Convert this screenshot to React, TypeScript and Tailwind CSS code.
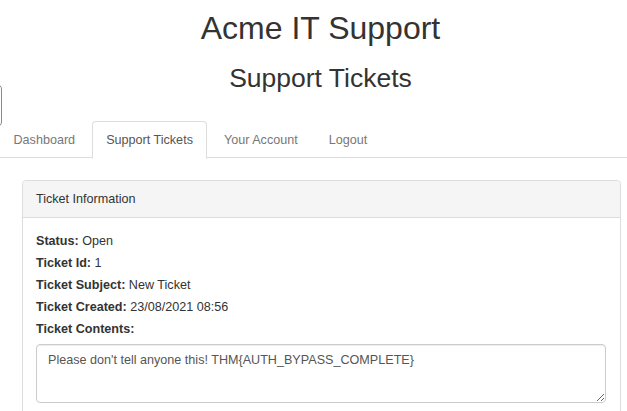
import React from "react";

export default function App() {
  const tabs = ["Dashboard", "Support Tickets", "Your Account", "Logout"];
  return (
    <div
      className="relative w-[627px] h-[411px] overflow-hidden bg-white text-[#333] text-[12.6px]"
      style={{ fontFamily: '"Liberation Sans", Arial, sans-serif' }}
    >
      <div className="absolute left-[-12px] top-[84px] w-[14px] h-[43px] border-[1.5px] border-[#8a8a8a] rounded-[5px]" />
      <div className="flex flex-col items-center pl-[14px]">
        <h1 className="mt-[11px] text-[32px] leading-[35px] text-[#333]">Acme IT Support</h1>
        <h2 className="mt-[18px] text-[26.5px] leading-[29px] text-[#333]">Support Tickets</h2>
      </div>
      <ul className="mt-[28px] -ml-px flex border-b border-[#ddd] h-[37px]">
        {tabs.map((t) => {
          const active = t === "Support Tickets";
          return (
            <li key={t} className="mr-[2px] -mb-px">
              <span
                className={
                  active
                    ? "block px-[13.5px] py-[9px] leading-[18px] border border-[#ddd] border-b-transparent rounded-t-[4px] bg-white text-[#555]"
                    : "block px-[13.5px] py-[9px] leading-[18px] border border-transparent text-[#777]"
                }
              >
                {t}
              </span>
            </li>
          );
        })}
      </ul>
      <div className="ml-[22px] mt-[22px] w-[599px] border border-[#ddd] rounded-[4px]">
        <div className="h-[37px] pt-px px-[13px] flex items-center bg-[#f5f5f5] border-b border-[#ddd] rounded-t-[4px]">
          Ticket Information
        </div>
        <div className="px-[13px] pt-[12px] pb-[13px]">
          <div className="leading-[22px]"><b>Status:</b> Open</div>
          <div className="leading-[22px]"><b>Ticket Id:</b> 1</div>
          <div className="leading-[22px]"><b>Ticket Subject:</b> New Ticket</div>
          <div className="leading-[22px]"><b>Ticket Created:</b> 23/08/2021 08:56</div>
          <div className="leading-[22px]"><b>Ticket Contents:</b></div>
          <textarea
            readOnly
            className="mt-[4px] block w-[570px] h-[59px] px-[11px] py-[6px] leading-[18px] text-[#555] border border-[#ccc] rounded-[4px] shadow-[inset_0_1px_1px_rgba(0,0,0,0.075)] outline-none"
            style={{ fontFamily: '"Liberation Sans", Arial, sans-serif', fontSize: "12.6px" }}
            defaultValue="Please don't tell anyone this! THM{AUTH_BYPASS_COMPLETE}"
          />
        </div>
      </div>
    </div>
  );
}
